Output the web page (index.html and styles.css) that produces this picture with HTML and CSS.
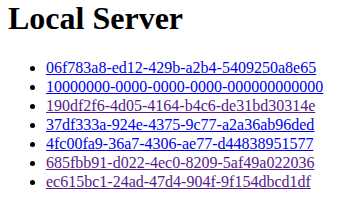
FILE: index.html
```html
<!DOCTYPE html>
<html lang="en">
<head>
    <meta charset="UTF-8">
    <meta name="viewport" content="width=device-width, initial-scale=1.0">
    <title>Local Server</title>
    <link rel="stylesheet" href="styles.css">
</head>
<body>

    <h1>Local Server</h1>

    <!-- Device list -->
    <ul class="devices">
        <li><a href="#06f783a8">06f783a8-ed12-429b-a2b4-5409250a8e65</a></li>
        <li><a href="#10000000">10000000-0000-0000-0000-000000000000</a></li>
        <li><a class="visited" href="#190df2f6">190df2f6-4d05-4164-b4c6-de31bd30314e</a></li>
        <li><a href="#37df333a">37df333a-924e-4375-9c77-a2a36ab96ded</a></li>
        <li><a href="#4fc00fa9">4fc00fa9-36a7-4306-ae77-d44838951577</a></li>
        <li><a class="visited" href="#685fbb91">685fbb91-d022-4ec0-8209-5af49a022036</a></li>
        <li><a class="visited" href="#ec615bc1">ec615bc1-24ad-47d4-904f-9f154dbcd1df</a></li>
    </ul>

</body>
</html>
```

FILE: styles.css
```css
body {
    font-family: "Liberation Serif", serif;
    margin: 0 8px;
}

h1 {
    margin: 0 0 21px;
    line-height: 37px;
}

.devices {
    margin: 0;
    padding-left: 38px;
}

.devices li {
    line-height: 19px;
}

.devices a {
    color: #0000ee;
}

.devices a.visited {
    color: #551a8b;
}
```
